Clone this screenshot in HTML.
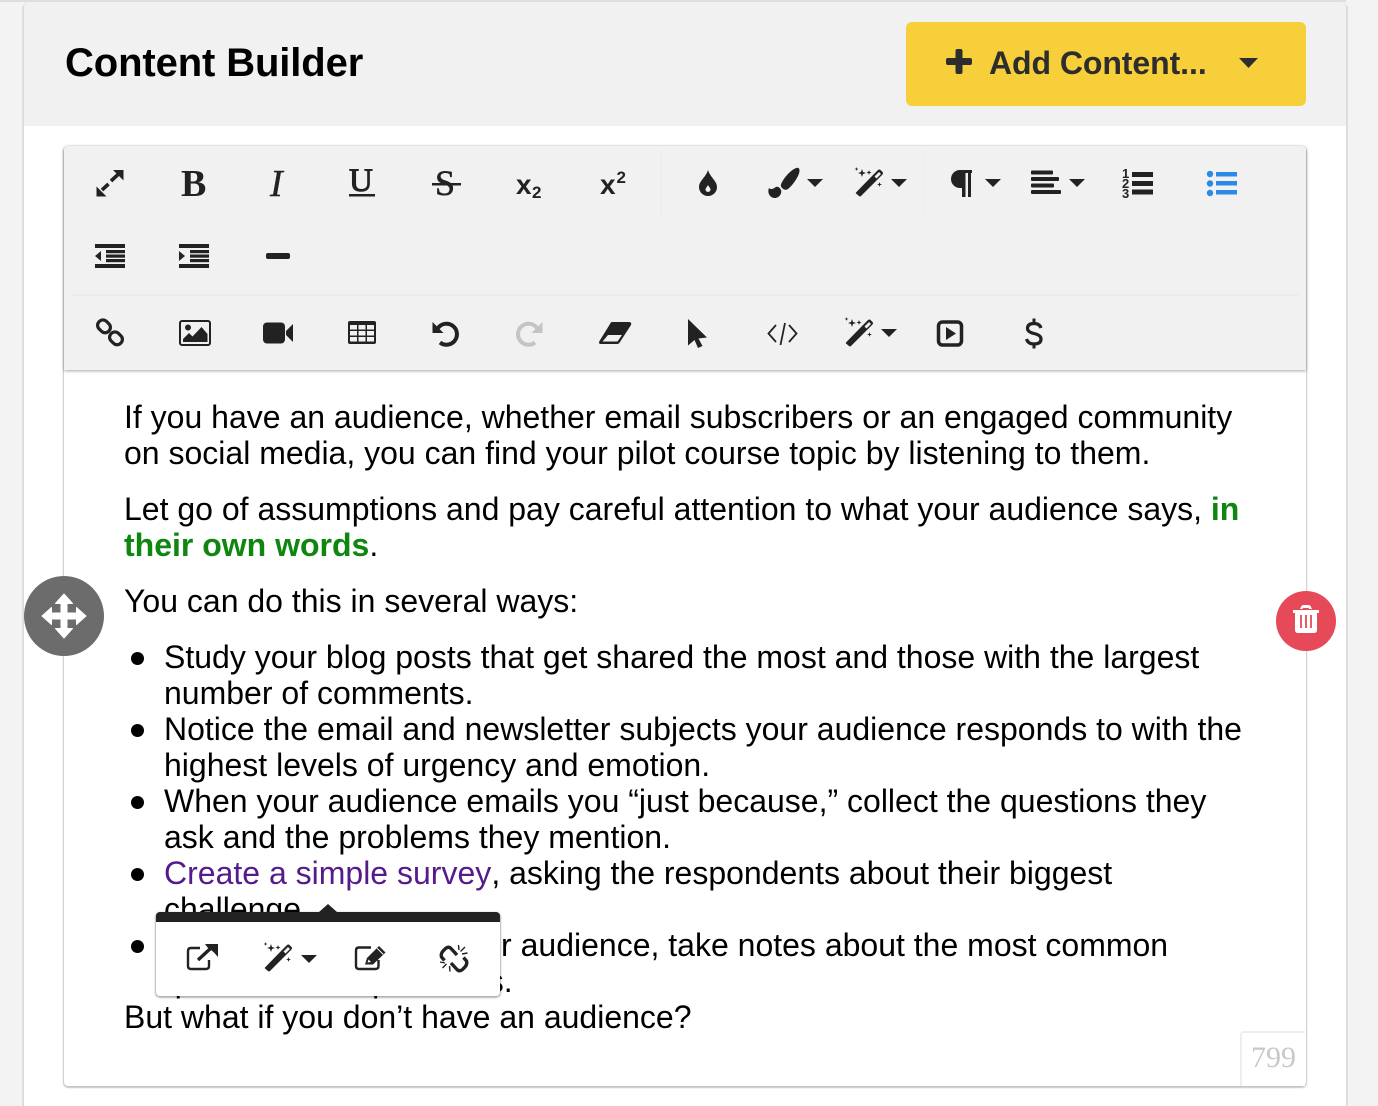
<!DOCTYPE html>
<html><head><meta charset="utf-8"><style>
html,body{margin:0;padding:0;width:1378px;height:1106px;overflow:hidden;background:#f3f3f3;font-family:"Liberation Sans",Arial,sans-serif;color:#000}
.abs{position:absolute}
#card{left:24px;top:2px;width:1322px;height:1104px;background:#fff;border-radius:6px 6px 0 0;box-shadow:-1px 0 0 0 #dcdcdc,1px 0 0 0 #dcdcdc;overflow:hidden}
#strip{left:0;top:0;width:1346px;height:2px;background:#dedede}
#edgeL{left:22px;top:6px;width:2px;height:1100px;background:#e0e0e0}
#edgeR{left:1346px;top:6px;width:2px;height:1100px;background:#e0e0e0}
#title{left:65px;top:40px;font-size:40px;font-weight:700;line-height:46px;white-space:nowrap;position:absolute;letter-spacing:-.12px}
#btn{left:906px;top:22px;width:400px;height:84px;background:#f7cf3b;border-radius:6px}
#btntxt{left:989px;top:42px;font-size:32px;font-weight:700;line-height:42px;color:#2d2d2d;white-space:nowrap;letter-spacing:-.07px}
#box{left:64px;top:146px;width:1242px;height:940px;background:#fff;border-radius:4px;box-shadow:0 1px 3px rgba(0,0,0,.12),0 1px 1px 1px rgba(0,0,0,.16)}
#bar{left:64px;top:146px;width:1242px;height:224px;background:#f1f1f1;border-radius:4px 4px 0 0;box-shadow:0 1px 3px rgba(0,0,0,.35)}
.l{position:absolute;left:124px;font-size:32px;line-height:36px;white-space:nowrap;letter-spacing:0}
.i{left:164px}
.dot{position:absolute;left:131px;width:13px;height:13px;border-radius:50%;background:#000}
a{color:#551a8b;text-decoration:none;margin-right:.1px}
b.g{color:#0f860f}
#cnt{left:1240px;top:1031px;width:65px;height:55px;border-top:2px solid #eee;border-left:2px solid #eee;border-radius:4px 0 0 0;box-sizing:border-box;background:#fff;font-family:"Liberation Serif",serif;font-size:30px;line-height:50px;color:#c8c8c8;text-align:center}
#pop{left:156px;top:912px;width:344px;height:84px;background:#fff;border-top:10px solid #222;box-sizing:border-box;border-radius:4px;box-shadow:0 1px 3px rgba(0,0,0,.25),0 1px 1px 1px rgba(0,0,0,.16)}
#over{left:0;top:0}
</style></head><body>
<div class="abs" id="edgeL"></div>
<div class="abs" id="edgeR"></div>
<div class="abs" id="card"></div>
<div class="abs" id="strip"></div>
<div class="abs" style="left:24px;top:2px;width:1322px;height:124px;background:#f1f1f1;border-radius:6px 6px 0 0"></div>
<div class="abs" id="title">Content Builder</div>
<div class="abs" id="btn"></div>
<div class="abs" id="btntxt">Add Content...</div>
<div class="abs" id="box"></div>
<div class="abs" id="bar"></div>

<div class="l" style="top:399px">If you have an audience, whether email subscribers or an engaged community</div>
<div class="l" style="top:435px">on social media, you can find your pilot course topic by listening to them.</div>
<div class="l" style="top:491px">Let go of assumptions and pay careful attention to what your audience says, <b class="g">in</b></div>
<div class="l" style="top:527px"><b class="g">their own words</b>.</div>
<div class="l" style="top:583px">You can do this in several ways:</div>
<div class="dot" style="top:652px"></div>
<div class="l i" style="top:639px">Study your blog posts that get shared the most and those with the largest</div>
<div class="l i" style="top:675px">number of comments.</div>
<div class="dot" style="top:724px"></div>
<div class="l i" style="top:711px">Notice the email and newsletter subjects your audience responds to with the</div>
<div class="l i" style="top:747px">highest levels of urgency and emotion.</div>
<div class="dot" style="top:796px"></div>
<div class="l i" style="top:783px">When your audience emails you “just because,” collect the questions they</div>
<div class="l i" style="top:819px">ask and the problems they mention.</div>
<div class="dot" style="top:868px"></div>
<div class="l i" style="top:855px"><a>Create a simple survey</a>, asking the respondents about their biggest</div>
<div class="l i" style="top:891px">challenge.</div>
<div class="dot" style="top:940px"></div>
<div class="l i" style="top:927px"><span style="margin-right:8px">When you talk with you</span>r audience, take notes about the most common</div>
<div class="l i" style="top:963px">questions and problems.</div>
<div class="l" style="top:999px">But what if you don’t have an audience?</div>

<div class="abs" id="cnt">799</div>
<div class="abs" id="pop"></div>

<svg class="abs" id="over" width="1378" height="1106" viewBox="0 0 1378 1106" xmlns="http://www.w3.org/2000/svg">
<defs>
<g id="wand" fill="#222">
  <path d="M1 25.500 L18 8 L23 3 Q24.500 2 25.500 3 L27.500 5 Q28.500 6 27.500 7.500 L23 12 L6 29 Q5 30 4 29 L1 26.500 Q0.500 26 1 25.500Z"/>
  <path d="M19.500 9.500 L24 5 L26 7 L21.500 11.500Z" fill="#f1f1f1"/>
  <path d="M7 2 L8 5 L11 6 L8 7 L7 10 L6 7 L3 6 L6 5Z"/>
  <path d="M14 3 L14.600 4.800 L16.500 5.500 L14.600 6.200 L14 8 L13.400 6.200 L11.500 5.500 L13.400 4.800Z"/>
  <path d="M1.500 0 L2 1.500 L3.500 2 L2 2.500 L1.500 4 L1 2.500 L-.5 2 L1 1.500Z"/>
  <path d="M24.500 15 L25.100 16.900 L27 17.500 L25.100 18.100 L24.500 20 L23.900 18.100 L22 17.500 L23.900 16.900Z"/>
</g>
</defs>

<!-- add content -->
<rect x="955.500" y="49" width="7" height="25" rx="2" fill="#2d2d2d"/>
<rect x="946" y="58" width="26" height="7" rx="2" fill="#2d2d2d"/>
<path d="M1239 58h19l-9.500 10z" fill="#2d2d2d"/>

<!-- separators -->
<rect x="661" y="150" width="1" height="66" fill="#ebebeb"/>
<rect x="923" y="150" width="1" height="66" fill="#ebebeb"/>
<rect x="72" y="294" width="1226" height="2" fill="#ebebeb"/>

<g fill="#222">
<!-- expand -->
<path d="M113 170h10.500v10.500zM96.500 186.500l10 10h-10z"/>
<path d="M102 190l6.500-6M111 181l7-6.500" stroke="#222" stroke-width="3.600" fill="none"/>
<!-- B I U S -->
<text x="181" y="196" font-family="'Liberation Serif',serif" font-weight="700" font-size="38">B</text>
<text x="270" y="196" font-family="'Liberation Serif',serif" font-style="italic" font-size="38" stroke="#222" stroke-width=".4">I</text>
<text x="349" y="191" font-family="'Liberation Serif',serif" font-size="33" stroke="#222" stroke-width="1">U</text>
<rect x="349" y="194" width="26" height="2.500"/>
<text x="435" y="195" font-family="'Liberation Serif',serif" font-size="36" stroke="#222" stroke-width=".6">S</text>
<rect x="432" y="183" width="29" height="2.500"/>
<!-- sub / sup -->
<text x="516" y="194" font-family="'Liberation Sans',sans-serif" font-weight="700" font-size="28">x</text>
<text x="532" y="198" font-family="'Liberation Sans',sans-serif" font-weight="700" font-size="17">2</text>
<text x="600" y="194" font-family="'Liberation Sans',sans-serif" font-weight="700" font-size="28">x</text>
<text x="616.500" y="183" font-family="'Liberation Sans',sans-serif" font-weight="700" font-size="17">2</text>
<!-- drop -->
<path fill-rule="evenodd" d="M708 170C710 177 717 181 717 187A9 9 0 0 1 699 187C699 181 706 177 708 170ZM708 185C707 187 705.500 188 705.500 189.500A2.500 2.500 0 0 0 710.500 189.500C710.500 188 709 187 708 185Z"/>
<!-- brush -->
<path d="M794 169Q799 166 799.500 170C800 175 793 185 788 189Q785 191 782 188Q780 186 781.500 183C784 178 789 172 794 169Z"/>
<path d="M769 188C771 190 773 189 775 187.500Q778 185.500 780.500 189C783 193 779 198 775 198C770 198 767 193 769 188Z"/>
<path d="M807 179h16l-8 8zM891 179h16l-8 8zM985 179h16l-8 8zM1069 179h16l-8 8zM881 329h16l-8 8z"/>
<!-- pilcrow -->
<path d="M972 170H960A9 9 0 0 0 960 188H962V197H965.500V173H968V197H971V173H972Z"/>
<!-- align -->
<rect x="1031" y="170.500" width="22" height="4" rx="1"/><rect x="1031" y="177" width="28" height="4" rx="1"/><rect x="1031" y="183.500" width="23" height="4" rx="1"/><rect x="1031" y="190" width="30" height="4" rx="1"/>
<!-- ol -->
<rect x="1132" y="172" width="21" height="5"/><rect x="1132" y="181" width="21" height="5"/><rect x="1132" y="189.500" width="21" height="5"/>
<text x="1122" y="178" font-family="'Liberation Sans',sans-serif" font-weight="700" font-size="13">1</text>
<text x="1122" y="188" font-family="'Liberation Sans',sans-serif" font-weight="700" font-size="13">2</text>
<text x="1122" y="198" font-family="'Liberation Sans',sans-serif" font-weight="700" font-size="13">3</text>
<!-- outdent -->
<rect x="95" y="244" width="30" height="4"/><rect x="95" y="264" width="30" height="4"/>
<rect x="106" y="250" width="19" height="3.200"/><rect x="106" y="254.500" width="19" height="3.200"/><rect x="106" y="259" width="19" height="3.200"/>
<path d="M101 251v10l-6-5z"/>
<!-- indent -->
<rect x="179" y="244" width="30" height="4"/><rect x="179" y="264" width="30" height="4"/>
<rect x="190" y="250" width="19" height="3.200"/><rect x="190" y="254.500" width="19" height="3.200"/><rect x="190" y="259" width="19" height="3.200"/>
<path d="M179 251v10l6-5z"/>
<!-- hr -->
<rect x="266" y="253" width="24" height="6" rx="2"/>
<!-- image -->
<rect x="180" y="321" width="30" height="24" rx="2" fill="none" stroke="#222" stroke-width="2"/>
<circle cx="188" cy="327.500" r="3"/>
<path d="M183 342v-3l6-6 3.500 3.500 9-9.500 6 7v8z"/>
<!-- video -->
<rect x="263" y="322.500" width="22" height="21" rx="4"/>
<path d="M286 331l7-7v18l-7-7z"/>
<!-- table -->
<rect x="348" y="321" width="28" height="23" rx="2"/>
<g fill="#f1f1f1"><rect x="350" y="325" width="7" height="4.500"/><rect x="358.500" y="325" width="7" height="4.500"/><rect x="367" y="325" width="7" height="4.500"/><rect x="350" y="331" width="7" height="4.500"/><rect x="358.500" y="331" width="7" height="4.500"/><rect x="367" y="331" width="7" height="4.500"/><rect x="350" y="337" width="7" height="4.500"/><rect x="358.500" y="337" width="7" height="4.500"/><rect x="367" y="337" width="7" height="4.500"/></g>
<!-- undo -->
<path d="M438 328A10.500 10.500 0 1 1 440 342.500" fill="none" stroke="#222" stroke-width="4"/>
<path d="M432.500 322v11h11z"/>
<!-- eraser -->
<path fill-rule="evenodd" d="M612 322H629Q632 322 631 325L620 342Q619 344 617 344H601Q598 344 599.500 341L610 324Q611 322 612 322ZM608 335L602.500 341.500H617.500L622 335Z"/>
<!-- pointer -->
<path d="M688 319L707 337.500L698.500 338.500L702.500 346L698 348L694.500 340L688 345.500Z"/>
<!-- play box -->
<rect x="938.500" y="322" width="23" height="23" rx="4" fill="none" stroke="#222" stroke-width="3.500"/>
<path d="M946 327v13l10-6.500z"/>
</g>
<!-- dollar -->
<path d="M1041 328Q1039.500 323.500 1034 323.500Q1027.500 323.500 1027.500 328.500Q1027.500 332 1034 333.500Q1041 335 1041 339Q1041 344 1034 344Q1028 344 1026.500 339" fill="none" stroke="#222" stroke-width="3.200"/>
<path d="M1032.500 318.500h3v5h-3zM1032.500 343.500h3v5h-3z" fill="#222"/>
<use href="#wand" x="855" y="167"/>
<use href="#wand" x="845" y="317"/>
<!-- ul -->
<g fill="#2a8ae6"><circle cx="1210" cy="174" r="3.200"/><circle cx="1210" cy="183.500" r="3.200"/><circle cx="1210" cy="193" r="3.200"/><rect x="1216" y="172" width="21" height="4.500"/><rect x="1216" y="181" width="21" height="4.500"/><rect x="1216" y="190" width="21" height="4.500"/></g>
<!-- link -->
<g fill="none" stroke="#222" stroke-width="3.200"><rect x="97.500" y="321" width="13.500" height="10.500" rx="5" transform="rotate(45 104 326)"/><rect x="109.500" y="333" width="13.500" height="10.500" rx="5" transform="rotate(45 116 338)"/></g>
<!-- redo -->
<path d="M537 328A10.500 10.500 0 1 0 535 342.500" fill="none" stroke="#c4c4c4" stroke-width="4"/>
<path d="M542.500 322v11h-11z" fill="#c4c4c4"/>
<!-- code -->
<path d="M776 325l-7.500 8.500 7.500 8.500M789 325l7.500 8.500-7.500 8.500M785 323l-4.500 22" fill="none" stroke="#222" stroke-width="1.800"/>

<!-- popup arrow -->
<path d="M319 912l9-8 9 8z" fill="#222"/>
<!-- popup icons -->
<g fill="none" stroke="#222" stroke-width="2.400">
<path d="M209 960v6q0 3-3 3h-15q-3 0-3-3v-15q0-3 3-3h9"/>
<path d="M198 960l13-12" stroke-width="3.400"/>
<path d="M378.500 960v6q0 3-3 3h-16.500q-3 0-3-3v-15.500q0-3 3-3h12"/>
<path d="M444.500 960.500L441.500 957Q440.500 954 443 951L445.500 948.500Q448.500 946 451 948.500L457 955" stroke-width="3.400"/>
<path d="M463.500 957.500L466.500 961Q467.500 964 465 967L462.500 969.500Q459.500 972 457 969.500L451 963" stroke-width="3.400"/>
<path d="M458.500 945l.5 5M465 947l-4.500 4.500M467.500 953l-5.500 1M440 962l5 1M442.500 968l4-4M449.500 966l.5 5.500" stroke-width="1.400"/>
</g>
<path d="M205 944h13v13l-4-4.500-3-2.500-3-2z" fill="#222"/>
<path d="M365 964.500L367 958L379 946L385.500 952.500L373 964.500Z" fill="#222"/>
<path d="M377 948.200L383.200 954.400" stroke="#fff" stroke-width="1" fill="none"/>
<path d="M367.500 962.500l1-3 2.500 2.500z" fill="#fff"/>
<use href="#wand" x="264" y="942"/>
<path d="M301 955h16l-8 8z" fill="#222"/>

<!-- move handle -->
<circle cx="64" cy="616" r="40" fill="#6c6c6c"/>
<path d="M64 594L72.500 603.500H67V613H76.500V607.500L86 616L76.500 624.500V619H67V628.500H72.500L64 638L55.500 628.500H61V619H51.500V624.500L42 616L51.500 607.500V613H61V603.500H55.500Z" fill="#fff" stroke="#fff" stroke-width="1" stroke-linejoin="round"/>
<!-- trash -->
<circle cx="1306" cy="621" r="30" fill="#e64a58"/>
<path d="M1293 610h26v3h-2v17q0 3-3 3h-16q-3 0-3-3v-17h-2zM1300 609l1-2q.5-2 3-2h4q2.500 0 3 2l1 2h-3l-.5-1h-5.500l-.5 1z" fill="#fff"/>
<path d="M1301 615v13M1306 615v13M1311 615v13" stroke="#e64a58" stroke-width="1.800"/>
</svg>
</body></html>
